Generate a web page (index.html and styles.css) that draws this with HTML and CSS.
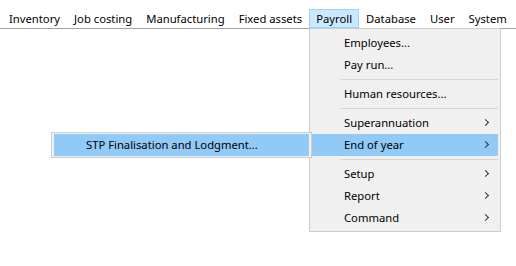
FILE: index.html
```html
<!DOCTYPE html>
<html lang="en">
<head>
    <meta charset="UTF-8">
    <title>Payroll menu</title>
    <link rel="stylesheet" href="styles.css">
</head>
<body>

<div class="menubar">
    <div class="menu-item">Inventory</div>
    <div class="menu-item">Job costing</div>
    <div class="menu-item">Manufacturing</div>
    <div class="menu-item">Fixed assets</div>
    <div class="menu-item open">Payroll</div>
    <div class="menu-item">Database</div>
    <div class="menu-item">User</div>
    <div class="menu-item">System</div>
</div>

<ul class="dropdown">
    <li>Employees...</li>
    <li>Pay run...</li>
    <li class="sep"></li>
    <li>Human resources...</li>
    <li class="sep"></li>
    <li class="sub">Superannuation</li>
    <li class="sub active">End of year
        <ul class="submenu">
            <li class="active">STP Finalisation and Lodgment...</li>
        </ul>
    </li>
    <li class="sep"></li>
    <li class="sub">Setup</li>
    <li class="sub">Report</li>
    <li class="sub">Command</li>
</ul>

</body>
</html>
```

FILE: styles.css
```css
body {
    margin: 0;
    background: #fff;
    font-family: 'Noto Sans', 'Liberation Sans', sans-serif;
    font-size: 11.25px;
    color: #000;
}
.menubar {
    display: flex;
    padding: 9px 0 0 2px;
    border-bottom: 1px solid #a0a0a0;
}
.menu-item {
    padding: 0 6px;
    line-height: 17px;
    border: 1px solid transparent;
    white-space: nowrap;
}
.menu-item.open {
    background: #cce8ff;
    border-color: #99d1ff;
}
ul {
    list-style: none;
    margin: 0;
}
.dropdown {
    position: absolute;
    z-index: 10;
    top: 28px;
    left: 309px;
    width: 186px;
    padding: 3px 2px 2px;
    background: #f0f0f0;
    border: 1px solid #cccccc;
}
.dropdown li {
    position: relative;
    height: 22px;
    line-height: 21px;
    padding-left: 32px;
    white-space: nowrap;
}
.dropdown li.sub::after {
    content: "";
    position: absolute;
    right: 10px;
    top: 8px;
    width: 4px;
    height: 4px;
    border-right: 1px solid #333;
    border-top: 1px solid #333;
    transform: rotate(45deg);
}
.dropdown li.sep {
    height: 7px;
    padding: 0;
    margin-left: 28px;
}
.dropdown li.sep::before {
    content: "";
    display: block;
    padding-top: 3px;
    border-bottom: 1px solid #d7d7d7;
}
.dropdown li.active {
    background: #91c9f7;
}
.submenu {
    position: absolute;
    right: 100%;
    top: -2px;
    width: 255px;
    padding: 1px 2px;
    background: #f0f0f0;
    border: 1px solid #cccccc;
}
```
